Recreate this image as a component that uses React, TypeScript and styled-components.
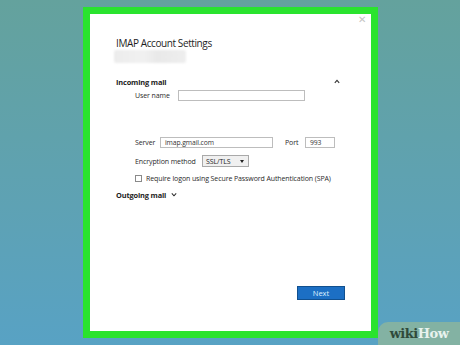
import styled, { createGlobalStyle } from 'styled-components';

const GlobalStyle = createGlobalStyle`
  html, body {
    margin: 0;
    padding: 0;
  }
  body {
    font-family: "Open Sans", "Noto Sans", sans-serif;
  }
`;

// Фон страницы
const Page = styled.div`
  position: relative;
  width: 460px;
  height: 345px;
  overflow: hidden;
  background: linear-gradient(180deg, #64a29d 0%, #5ea2b4 60%, #58a2c4 100%);
  padding: 7px 0 0 83px;
  box-sizing: border-box;
`;

// Зелёная рамка вокруг окна
const Frame = styled.div`
  width: 295px;
  height: 331px;
  box-sizing: border-box;
  border: 7px solid #2ae32e;
  background: #ffffff;
  position: relative;
`;

const CloseButton = styled.div`
  position: absolute;
  top: 0px;
  right: 5px;
  color: #c4c4c4;
  font-size: 10px;
  line-height: 10px;
`;

const Dialog = styled.div`
  display: flex;
  flex-direction: column;
  height: 100%;
  padding: 23px 26px 0 26px;
  box-sizing: border-box;
  color: #222;
`;

const Title = styled.div`
  font-size: 10px;
  font-weight: 500;
  color: #1e1e1e;
  letter-spacing: -0.4px;
  line-height: 13px;
`;

const BlurredEmail = styled.div`
  width: 72px;
  height: 13px;
  margin-top: 0px;
  margin-left: -2px;
  border-radius: 2px;
  background: linear-gradient(90deg, #ececec 0%, #f1f1f1 40%, #e9e9e9 60%, #eeeeee 100%);
  filter: blur(1px);
`;

const SectionHeader = styled.div<{ $top: number }>`
  display: flex;
  align-items: center;
  justify-content: space-between;
  margin-top: ${(p) => p.$top}px;
  font-size: 7.4px;
  font-weight: 700;
  color: #222;
  letter-spacing: -0.15px;
  height: 11px;
`;

const HeaderLeft = styled.div`
  display: flex;
  align-items: center;
  gap: 5px;
`;

const Chevron = styled.svg`
  width: 6px;
  height: 5px;
  margin-right: 5px;
`;

const Row = styled.div<{ $top: number }>`
  display: flex;
  align-items: center;
  margin-top: ${(p) => p.$top}px;
  padding-left: 19px;
  font-size: 7px;
  color: #2a2a2a;
  letter-spacing: -0.1px;
`;

const Label = styled.span<{ $width: number }>`
  width: ${(p) => p.$width}px;
  flex-shrink: 0;
`;

const TextBox = styled.div<{ $width: number }>`
  width: ${(p) => p.$width}px;
  height: 11px;
  box-sizing: border-box;
  border: 1px solid #bdbdbd;
  background: #fff;
  font-size: 6.8px;
  line-height: 9px;
  padding-left: 4px;
  color: #333;
`;

const Select = styled.div`
  width: 47px;
  height: 12px;
  box-sizing: border-box;
  border: 1px solid #a9a9a9;
  background: #f0f0f0;
  display: flex;
  align-items: center;
  justify-content: space-between;
  padding: 0 4px 0 3px;
  font-size: 7px;
  color: #222;
`;

const Caret = styled.span`
  width: 0;
  height: 0;
  border-left: 2.5px solid transparent;
  border-right: 2.5px solid transparent;
  border-top: 3px solid #222;
`;

const Checkbox = styled.span`
  width: 7px;
  height: 7px;
  box-sizing: border-box;
  border: 1px solid #8a8a8a;
  margin-right: 4px;
  background: #fff;
`;

const Footer = styled.div`
  margin-top: auto;
  display: flex;
  justify-content: flex-end;
  padding: 0 0 31px 0;
`;

const NextButton = styled.div`
  width: 48px;
  height: 14px;
  background: #1c6fc4;
  border: 1px solid #11508f;
  box-sizing: border-box;
  color: #dfefff;
  font-size: 7.5px;
  line-height: 12px;
  text-align: center;
`;

// Водяной знак wikiHow
const Watermark = styled.div`
  position: absolute;
  right: 0;
  bottom: 0;
  width: 82px;
  height: 23px;
  background: rgba(150, 185, 150, 0.7);
  border-top-left-radius: 10px;
  display: flex;
  align-items: center;
  justify-content: center;
  font-family: "DejaVu Serif", "Liberation Serif", serif;
  font-size: 13px;
  font-weight: 700;
  letter-spacing: -0.5px;
`;

const WikiPart = styled.span`
  color: #2f4a3a;
`;

const HowPart = styled.span`
  color: #e8f2ee;
`;

export default function App() {
  return (
    <Page>
      <GlobalStyle />
      <Frame>
        <CloseButton>✕</CloseButton>
        <Dialog>
          <Title>IMAP Account Settings</Title>
          <BlurredEmail />

          <SectionHeader $top={13}>
            <span>Incoming mail</span>
            <Chevron viewBox="0 0 6 5">
              <path d="M0.8 3.8 L3 1.4 L5.2 3.8" fill="none" stroke="#333" strokeWidth="1.1" />
            </Chevron>
          </SectionHeader>
          <Row $top={3}>
            <Label $width={43}>User name</Label>
            <TextBox $width={127} />
          </Row>

          <Row $top={36}>
            <Label $width={25}>Server</Label>
            <TextBox $width={113}>imap.gmail.com</TextBox>
            <Label $width={20} style={{ marginLeft: 12 }}>Port</Label>
            <TextBox $width={30}>993</TextBox>
          </Row>
          <Row $top={7}>
            <Label $width={67}>Encryption method</Label>
            <Select>
              <span>SSL/TLS</span>
              <Caret />
            </Select>
          </Row>
          <Row $top={7}>
            <Checkbox />
            <span>Require logon using Secure Password Authentication (SPA)</span>
          </Row>

          <SectionHeader $top={6}>
            <HeaderLeft>
              <span>Outgoing mail</span>
              <Chevron viewBox="0 0 6 5">
                <path d="M0.8 1.4 L3 3.8 L5.2 1.4" fill="none" stroke="#333" strokeWidth="1.1" />
              </Chevron>
            </HeaderLeft>
          </SectionHeader>

          <Footer>
            <NextButton>Next</NextButton>
          </Footer>
        </Dialog>
      </Frame>
      <Watermark>
        <WikiPart>wiki</WikiPart>
        <HowPart>How</HowPart>
      </Watermark>
    </Page>
  );
}
